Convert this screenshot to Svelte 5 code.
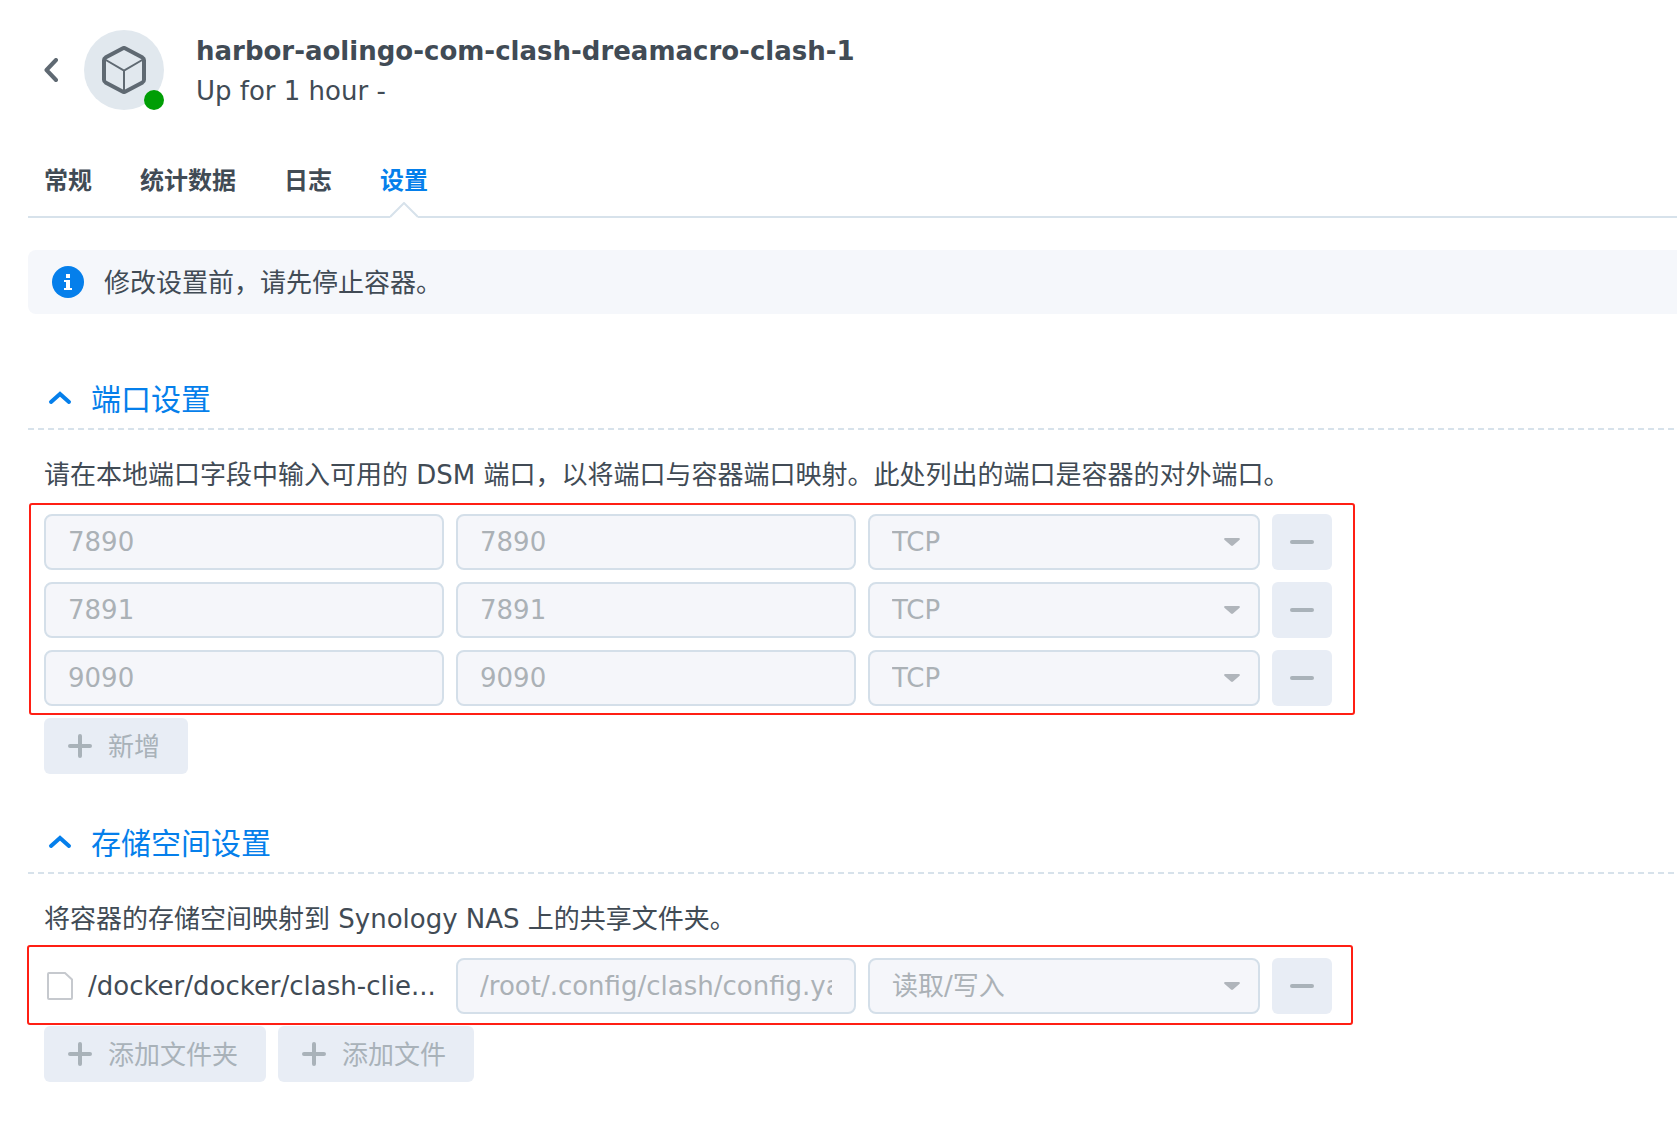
<script>
  const tabs = ['常规', '统计数据', '日志', '设置'];
  const ports = ['7890', '7891', '9090'];
  let active = $state('设置');
  let portsOpen = $state(true);
  let volumesOpen = $state(true);
</script>

{#snippet chevron(open)}
  <svg class="chevron" class:closed={!open} width="24" height="18" viewBox="0 0 24 18" aria-hidden="true">
    <path d="M3 12 12 4l9 8" fill="none" stroke="currentColor" stroke-width="4" stroke-linecap="round" stroke-linejoin="miter" />
  </svg>
{/snippet}

{#snippet plus()}
  <svg width="24" height="24" viewBox="0 0 24 24" aria-hidden="true">
    <path d="M12 2v20M2 12h20" fill="none" stroke="currentColor" stroke-width="4" stroke-linecap="round" />
  </svg>
{/snippet}

{#snippet dropdown(label, value)}
  <div class="dropdown">
    <select class="field" aria-label={label} disabled>
      <option>{value}</option>
    </select>
    <svg class="caret" width="16" height="8" viewBox="0 0 16 8" aria-hidden="true">
      <path d="M1 0h14a1 1 0 0 1 .6 1.7L9 7.5a1.5 1.5 0 0 1-2 0L.4 1.7A1 1 0 0 1 1 0z" fill="currentColor" />
    </svg>
  </div>
{/snippet}

{#snippet remove()}
  <button class="soft remove" type="button" aria-label="删除" disabled>
    <svg width="24" height="4" viewBox="0 0 24 4" aria-hidden="true">
      <rect width="24" height="4" rx="2" fill="currentColor" />
    </svg>
  </button>
{/snippet}

<main>
  <header>
    <button class="back" type="button" aria-label="返回">
      <svg width="14" height="24" viewBox="0 0 14 24" aria-hidden="true">
        <path d="M12 2 2.5 12 12 22" fill="none" stroke="currentColor" stroke-width="4" stroke-linecap="round" stroke-linejoin="round" />
      </svg>
    </button>
    <div class="avatar">
      <svg width="44" height="48" viewBox="0 0 44 48" aria-hidden="true">
        <path d="M20.5 2.4Q22 1.6 23.5 2.4L40.5 11.6Q42 12.5 42 14.2V33.8Q42 35.5 40.5 36.4L23.5 45.6Q22 46.4 20.5 45.6L3.5 36.4Q2 35.5 2 33.8V14.2Q2 12.5 3.5 11.6z" fill="none" stroke="currentColor" stroke-width="4" />
        <path d="M3 13.5 22 24.5 41 13.5M22 24.5V45" fill="none" stroke="currentColor" stroke-width="2" />
      </svg>
      <span class="status"></span>
    </div>
    <div class="heading">
      <h1>harbor-aolingo-com-clash-dreamacro-clash-1</h1>
      <p>Up for 1 hour -</p>
    </div>
  </header>

  <nav>
    {#each tabs as tab}
      <button type="button" class="tab" class:active={active === tab} onclick={() => (active = tab)}>
        {tab}
        {#if active === tab}
          <svg class="notch" width="28" height="16" viewBox="0 0 28 16" aria-hidden="true">
            <path d="M0 16V14L14 0 28 14V16z" fill="#fff" />
            <path d="M0 15 14 1 28 15" fill="none" stroke="#d7e2eb" stroke-width="2" />
          </svg>
        {/if}
      </button>
    {/each}
  </nav>

  <div class="notice" role="status">
    <svg width="32" height="32" viewBox="0 0 32 32" aria-hidden="true">
      <circle cx="16" cy="16" r="16" fill="#057feb" />
      <path d="M14 8h4v4h-4zM12 14h6v8h2v2h-8v-2h2v-6h-2z" fill="#fff" />
    </svg>
    <span class="label">修改设置前，请先停止容器。</span>
  </div>

  <section class="first">
    <h2>
      <button type="button" aria-expanded={portsOpen} onclick={() => (portsOpen = !portsOpen)}>
        {@render chevron(portsOpen)}<span class="label">端口设置</span>
      </button>
    </h2>
    {#if portsOpen}
      <p class="hint">请在本地端口字段中输入可用的 DSM 端口，以将端口与容器端口映射。此处列出的端口是容器的对外端口。</p>
      <div class="marked ports">
        {#each ports as port}
          <div class="row">
            <input class="field" type="text" aria-label="本地端口" value={port} disabled />
            <input class="field" type="text" aria-label="容器端口" value={port} disabled />
            {@render dropdown('协议', 'TCP')}
            {@render remove()}
          </div>
        {/each}
      </div>
      <div class="actions">
        <button class="soft add" type="button" disabled>{@render plus()}<span class="label">新增</span></button>
      </div>
    {/if}
  </section>

  <section>
    <h2>
      <button type="button" aria-expanded={volumesOpen} onclick={() => (volumesOpen = !volumesOpen)}>
        {@render chevron(volumesOpen)}<span class="label">存储空间设置</span>
      </button>
    </h2>
    {#if volumesOpen}
      <p class="hint">将容器的存储空间映射到 Synology NAS 上的共享文件夹。</p>
      <div class="marked volumes">
        <div class="row">
          <div class="path">
            <svg width="26" height="28" viewBox="0 0 26 28" aria-hidden="true">
              <path d="M2 1H18L25 7.5V26a1 1 0 0 1-1 1H2a1 1 0 0 1-1-1V2a1 1 0 0 1 1-1z" fill="#fff" stroke="#c6c9ce" stroke-width="2" />
            </svg>
            <span>/docker/docker/clash-clie...</span>
          </div>
          <input class="field" type="text" aria-label="装载路径" value="/root/.config/clash/config.yaml" disabled />
          {@render dropdown('权限', '读取/写入')}
          {@render remove()}
        </div>
      </div>
      <div class="actions">
        <button class="soft add" type="button" disabled>{@render plus()}<span class="label">添加文件夹</span></button>
        <button class="soft add" type="button" disabled>{@render plus()}<span class="label">添加文件</span></button>
      </div>
    {/if}
  </section>
</main>

<style>
  :global(body) {
    background: #fff;
  }
  main {
    padding: 30px 0 32px 28px;
    color: #414b55;
    font: 26px/36px 'DejaVu Sans', 'Noto Sans CJK SC', sans-serif;
  }
  main :global(*) {
    box-sizing: border-box;
  }
  h1,
  h2,
  p {
    margin: 0;
    font-size: inherit;
  }
  button,
  input,
  select {
    font: inherit;
    color: inherit;
    margin: 0;
  }
  button {
    border: 0;
    padding: 0;
    background: none;
    cursor: pointer;
  }
  button:disabled {
    cursor: default;
  }
  svg {
    display: block;
    flex: none;
  }
  .label {
    padding-top: 2px;
  }

  header {
    display: flex;
    align-items: center;
    height: 80px;
    padding-left: 16px;
  }
  .back {
    width: 40px;
    height: 40px;
    color: #5f6972;
  }
  .avatar {
    position: relative;
    display: grid;
    place-items: center;
    flex: none;
    width: 80px;
    height: 80px;
    border-radius: 50%;
    background: #e1e8ee;
    color: #5f6972;
  }
  .status {
    position: absolute;
    right: 0;
    bottom: 0;
    width: 20px;
    height: 20px;
    border-radius: 50%;
    background: #009e05;
  }
  .heading {
    margin-left: 32px;
    padding-top: 2px;
    line-height: 40px;
  }

  nav {
    display: flex;
    gap: 48px;
    margin-top: 34px;
    padding-left: 16px;
    border-bottom: 2px solid #d7e2eb;
  }
  .tab {
    position: relative;
    height: 72px;
    padding-top: 2px;
    font-size: 24px;
    font-weight: 700;
  }
  .tab.active,
  h2 {
    color: #057feb;
  }
  .notch {
    position: absolute;
    left: calc(50% - 14px);
    bottom: -2px;
  }

  .notice {
    display: flex;
    align-items: center;
    gap: 20px;
    height: 64px;
    margin-top: 32px;
    padding-left: 24px;
    border-radius: 8px 0 0 8px;
    background: #f5f7fb;
  }

  section {
    margin-top: 40px;
  }
  section.first {
    margin-top: 56px;
  }
  h2 {
    padding: 0 0 2px 16px;
    font-size: 30px;
    font-weight: 400;
    background: repeating-linear-gradient(90deg, #d7e2eb 0 6px, transparent 6px 10px) bottom / 100% 2px no-repeat;
  }
  h2 button {
    display: flex;
    align-items: center;
    gap: 19px;
    height: 58px;
    padding-left: 4px;
  }
  .closed {
    transform: rotate(180deg);
  }
  .hint {
    padding: 27px 16px 0;
  }

  .marked {
    display: grid;
    gap: 12px;
    max-width: 1326px;
    border: 2px solid #ff1f14;
    border-radius: 3px;
  }
  .ports {
    margin: 10px 0 3px 1px;
    padding: 9px 21px 7px 13px;
  }
  .volumes {
    margin: 8px 0 1px -1px;
    padding: 11px 19px 9px 15px;
  }
  .row {
    display: grid;
    grid-template-columns: minmax(0, 400fr) minmax(0, 400fr) minmax(0, 392fr) 60px;
    gap: 12px;
  }
  .field {
    display: block;
    width: 100%;
    height: 56px;
    padding: 0 22px;
    border: 2px solid #d4dfe9;
    border-radius: 8px;
    background: #f5f6fa;
    color: #abb1b6;
    opacity: 1;
  }
  select.field {
    appearance: none;
  }
  .dropdown {
    position: relative;
  }
  .caret {
    position: absolute;
    right: 20px;
    top: 24px;
    color: #b0b5bb;
    pointer-events: none;
  }
  .soft {
    height: 56px;
    border-radius: 6px;
    background: #e8edf5;
    color: #a9b2b9;
  }
  .remove {
    display: grid;
    place-items: center;
  }
  .path {
    display: flex;
    align-items: center;
    gap: 15px;
    padding-left: 3px;
    white-space: nowrap;
    overflow: hidden;
  }
  .actions {
    display: flex;
    gap: 12px;
    padding-left: 16px;
  }
  .add {
    display: flex;
    align-items: center;
    gap: 16px;
    padding: 0 28px 0 24px;
  }
</style>
